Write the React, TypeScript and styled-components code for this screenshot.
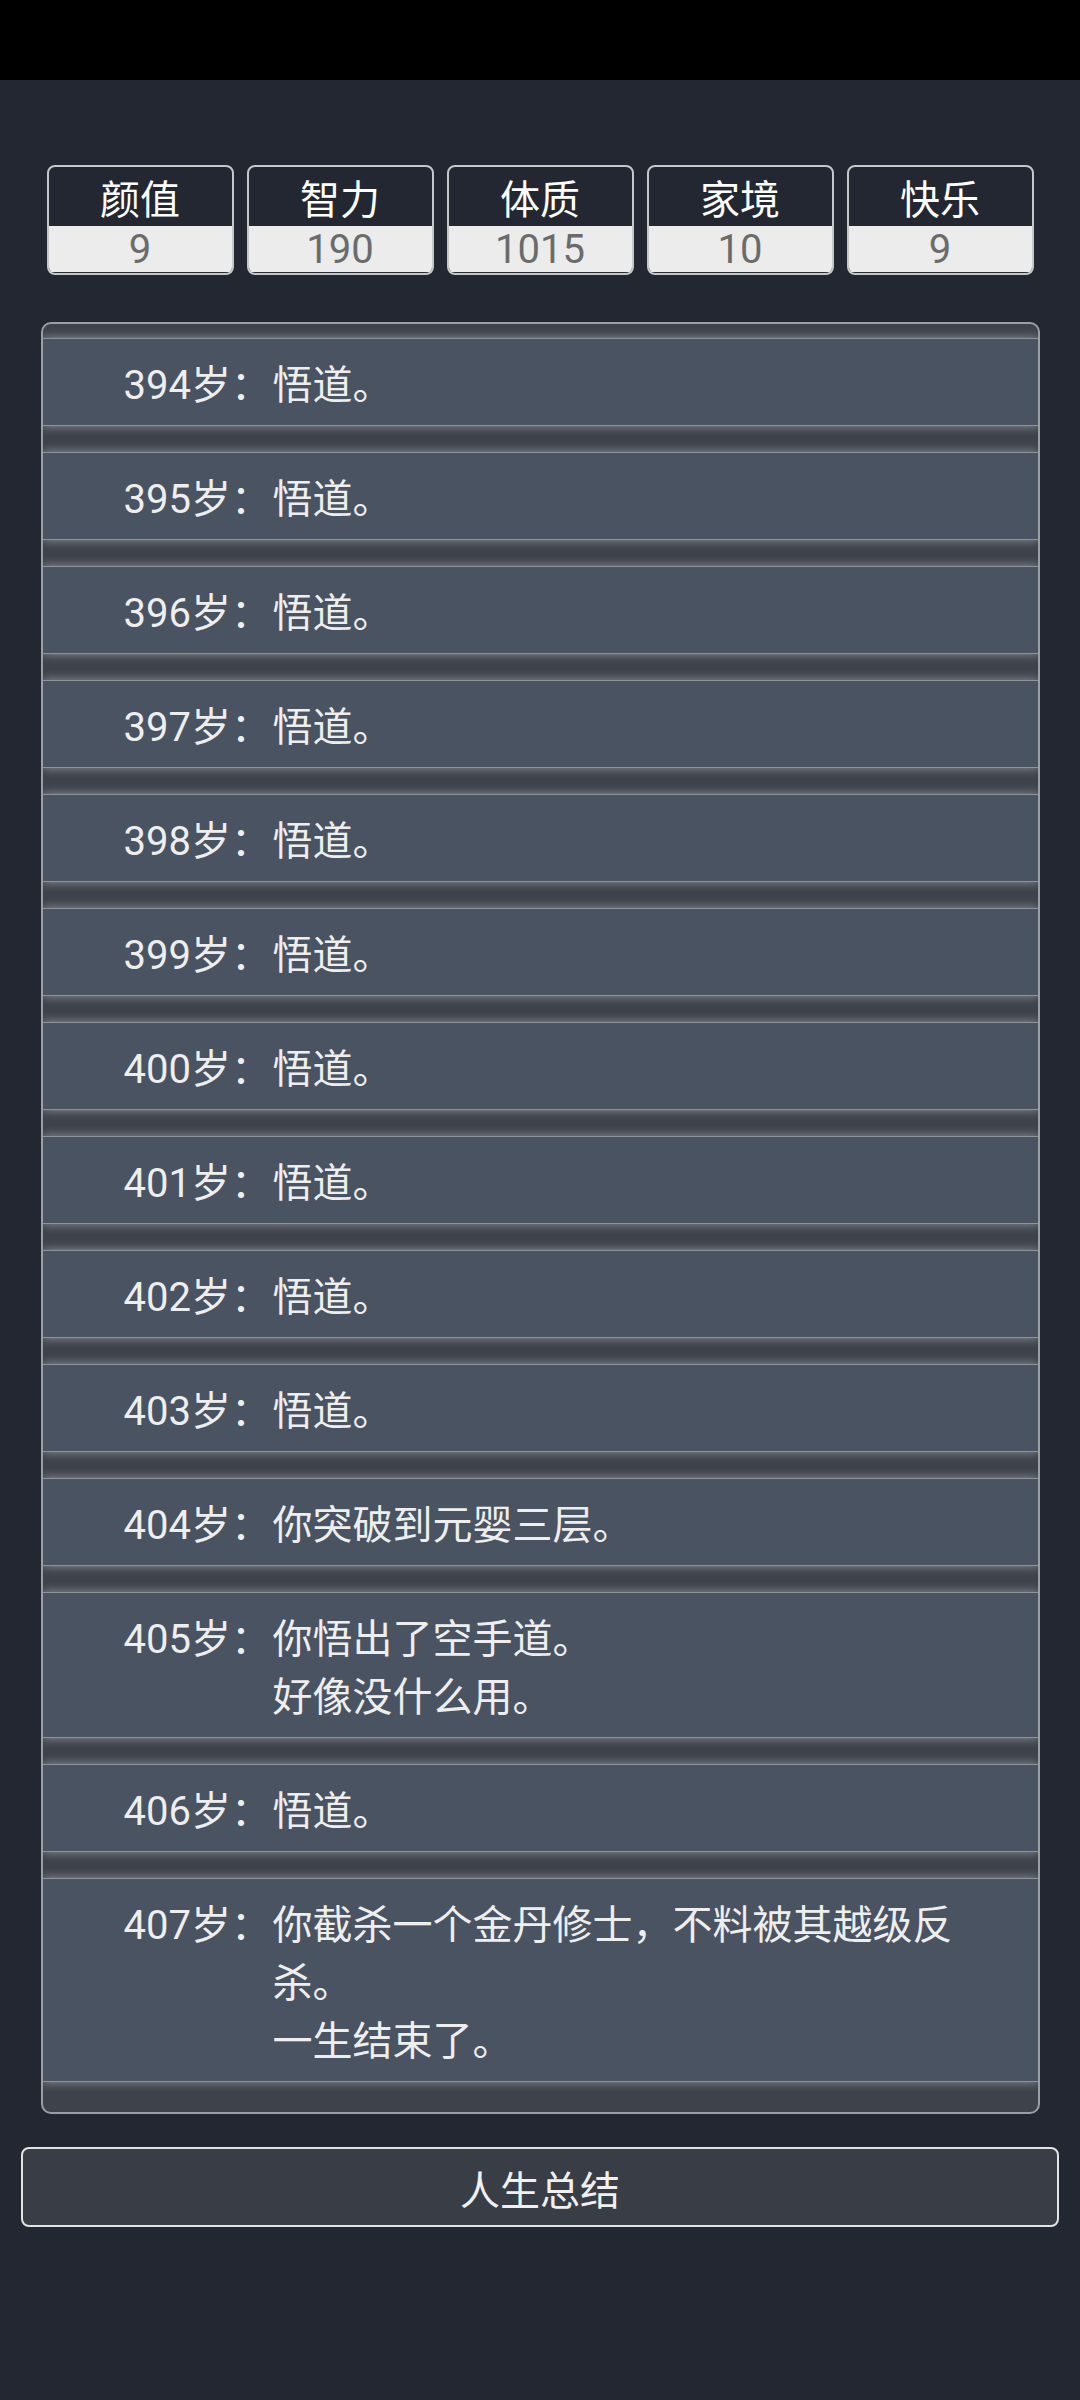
import React from 'react';
import styled, { createGlobalStyle } from 'styled-components';

const GlobalStyle = createGlobalStyle`
  html, body {
    margin: 0;
    padding: 0;
    background: #222731;
  }
  body {
    font-family: Roboto, "Noto Sans CJK SC", "Noto Sans", sans-serif;
  }
  * {
    box-sizing: border-box;
  }
`;

const Page = styled.div`
  width: 1080px;
  min-height: 2400px;
  background: #222731;
`;

const StatusBar = styled.div`
  height: 80px;
  background: #000;
`;

const Main = styled.main`
  padding-top: 85px;
`;

const StatsRow = styled.div`
  display: flex;
  justify-content: center;
  gap: 13px;
`;

const StatBox = styled.div`
  width: 187px;
  height: 110px;
  border: 2px solid #c6c7c9;
  border-radius: 8px;
  overflow: hidden;
  display: flex;
  flex-direction: column;
`;

const StatLabel = styled.div`
  flex: 1;
  display: flex;
  align-items: center;
  justify-content: center;
  color: #ffffff;
  font-size: 40px;
`;

const StatValue = styled.div`
  height: 47px;
  background: #ececec;
  color: #6b6b6b;
  font-size: 40px;
  line-height: 47px;
  text-align: center;
  border-bottom: 1px solid #2a2d33;
`;

const Panel = styled.section`
  width: 999px;
  margin: 47px auto 0;
  border: 2px solid #9a9ea5;
  border-radius: 10px;
  background: #3e424a;
  overflow: hidden;
  display: flex;
  flex-direction: column;
  gap: 28px;
  padding: 15px 0 31px;
`;

const Row = styled.div`
  display: flex;
  padding: 18px 81px 10px;
  background: #4a5361;
  color: #eeeeee;
  font-size: 40px;
  line-height: 58px;
  box-shadow: 0 0 0 1px #8f949b, 0 0 10px 1px rgba(160, 165, 172, 0.85);
`;

const Age = styled.span`
  flex: none;
  width: 149px;
  white-space: nowrap;
`;

const Content = styled.div`
  flex: 1;
  min-width: 0;
`;

const Line = styled.div``;

const SummaryButton = styled.button`
  display: block;
  width: 1038px;
  height: 80px;
  margin: 33px auto 0;
  border: 2px solid #e2e2e2;
  border-radius: 8px;
  background: #393d46;
  color: #f0f0f0;
  font-family: Roboto, "Noto Sans CJK SC", sans-serif;
  font-size: 40px;
  padding-top: 2px;
  cursor: pointer;
`;

const stats = [
  { label: '颜值', value: 9 },
  { label: '智力', value: 190 },
  { label: '体质', value: 1015 },
  { label: '家境', value: 10 },
  { label: '快乐', value: 9 },
];

const events: { age: number; lines: string[] }[] = [
  { age: 394, lines: ['悟道。'] },
  { age: 395, lines: ['悟道。'] },
  { age: 396, lines: ['悟道。'] },
  { age: 397, lines: ['悟道。'] },
  { age: 398, lines: ['悟道。'] },
  { age: 399, lines: ['悟道。'] },
  { age: 400, lines: ['悟道。'] },
  { age: 401, lines: ['悟道。'] },
  { age: 402, lines: ['悟道。'] },
  { age: 403, lines: ['悟道。'] },
  { age: 404, lines: ['你突破到元婴三层。'] },
  { age: 405, lines: ['你悟出了空手道。', '好像没什么用。'] },
  { age: 406, lines: ['悟道。'] },
  { age: 407, lines: ['你截杀一个金丹修士，不料被其越级反杀。', '一生结束了。'] },
];

const App = () => {
  return (
    <Page>
      <GlobalStyle />
      <StatusBar />
      <Main>
        <StatsRow>
          {stats.map((s) => (
            <StatBox key={s.label}>
              <StatLabel>{s.label}</StatLabel>
              <StatValue>{s.value}</StatValue>
            </StatBox>
          ))}
        </StatsRow>
        <Panel>
          {events.map((e) => (
            <Row key={e.age}>
              <Age>{e.age}岁：</Age>
              <Content>
                {e.lines.map((l, i) => (
                  <Line key={i}>{l}</Line>
                ))}
              </Content>
            </Row>
          ))}
        </Panel>
        <SummaryButton>人生总结</SummaryButton>
      </Main>
    </Page>
  );
};

export default App;
